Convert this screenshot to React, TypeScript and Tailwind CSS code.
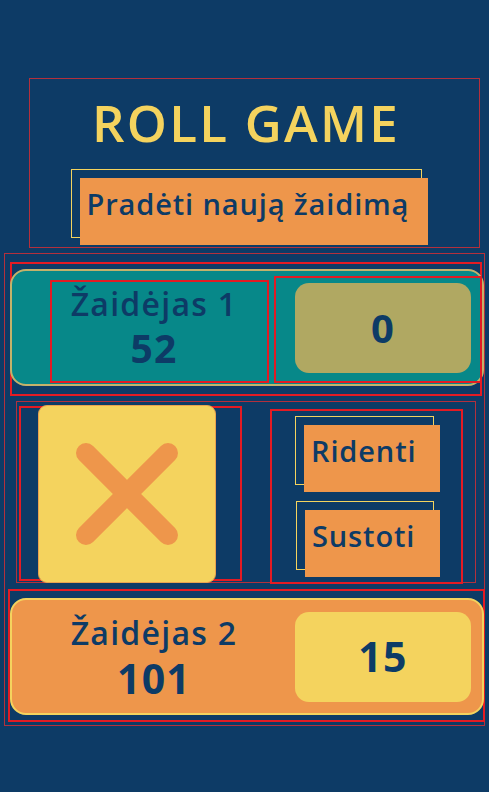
import React from "react";

const thin = "border border-[#b3303c]";
const thick = "border-2 border-[#e31b23]";

function PlayerCard({
  name,
  total,
  current,
  active,
}: {
  name: string;
  total: number;
  current: number;
  active?: boolean;
}) {
  return (
    <div
      className={`-ml-[2px] flex h-[117px] w-[474px] items-end rounded-[16px] border-2 pb-[1px] ${
        active ? "border-[#c4b26a] bg-[#078889]" : "border-[#f4d35e] bg-[#ee964b]"
      }`}
    >
      {/* name + total */}
      <div
        className={`ml-[38px] flex h-[103px] w-[219px] flex-col items-center pr-[11px] pt-[3px] text-[#0d3b66] ${
          active ? thick : "border-2 border-transparent"
        }`}
      >
        <span className="text-[32px] leading-[38px] font-semibold tracking-[0.04em]">{name}</span>
        <span
          className={`font-bold tracking-[0.03em] ${
            active ? "mt-[1px] text-[39px] leading-[47px]" : "mt-[2px] text-[41px] leading-[48px]"
          }`}
        >
          {total}
        </span>
      </div>

      {/* current score */}
      <div
        className={`ml-[5px] h-[107px] w-[208px] ${active ? thick : "border-2 border-transparent"}`}
      >
        <div
          className={`ml-[19px] mt-[5px] flex h-[90px] w-[176px] items-center justify-center rounded-[14px] font-bold tracking-[0.03em] text-[#0d3b66] ${
            active ? "bg-[#b0a862] text-[40px]" : "bg-[#f4d35e] text-[41px]"
          }`}
        >
          {current}
        </div>
      </div>
    </div>
  );
}

function OffsetButton({ label, className }: { label: string; className: string }) {
  return (
    <div className={`h-[69px] border border-[#f4d35e] ${className}`}>
      <button className="flex h-[67px] w-[calc(100%-1px)] translate-x-[8px] translate-y-[8px] items-start bg-[#ee964b] pl-[7px] pt-[8px] text-[29px] leading-[35px] font-semibold tracking-[0.03em] text-[#0d3b66]">
        {label}
      </button>
    </div>
  );
}

export default function App() {
  return (
    <div className="min-h-screen bg-[#0d3b66] pt-[78px] [font-family:'Open_Sans',sans-serif]">
      {/* Header */}
      <header className={`ml-[29px] mr-[9px] flex h-[170px] flex-col items-center pr-[17px] ${thin}`}>
        <h1 className="mt-[18px] text-[51px] leading-none font-semibold tracking-[0.045em] text-[#f4d35e]">
          ROLL GAME
        </h1>
        <OffsetButton label="Pradėti naują žaidimą" className="mt-[21px] w-[351px]" />
      </header>

      {/* Board */}
      <main className={`ml-[4px] mt-[5px] w-[481px] pb-[3px] ${thin}`}>
        {/* Player 1 */}
        <div className={`ml-[5px] mt-[8px] h-[134px] w-[472px] pt-[5px] ${thick}`}>
          <PlayerCard name="Žaidėjas 1" total={52} current={0} active />
        </div>

        {/* Dice + controls */}
        <div className={`ml-[11px] mt-[5px] flex h-[182px] w-[460px] ${thin}`}>
          <div className={`ml-[2px] mt-[4px] flex h-[175px] w-[223px] items-center ${thick}`}>
            <div className="ml-[17px] flex h-[178px] w-[178px] shrink-0 items-center justify-center rounded-[9px] border border-[#e9a24f] bg-[#f4d35e]">
              <svg width="104" height="104" viewBox="0 0 104 104" fill="none">
                <path
                  d="M11 11 93 93M93 11 11 93"
                  stroke="#ee964b"
                  strokeWidth="20"
                  strokeLinecap="round"
                />
              </svg>
            </div>
          </div>

          <div className={`ml-[28px] mt-[7px] flex h-[175px] w-[193px] flex-col ${thick}`}>
            <OffsetButton label="Ridenti" className="ml-[23px] mt-[5px] w-[139px]" />
            <OffsetButton label="Sustoti" className="ml-[24px] mt-[16px] w-[138px]" />
          </div>
        </div>

        {/* Player 2 */}
        <div className={`ml-[3px] mt-[6px] h-[133px] w-[477px] pl-[2px] pt-[7px] ${thick}`}>
          <PlayerCard name="Žaidėjas 2" total={101} current={15} />
        </div>
      </main>
    </div>
  );
}
